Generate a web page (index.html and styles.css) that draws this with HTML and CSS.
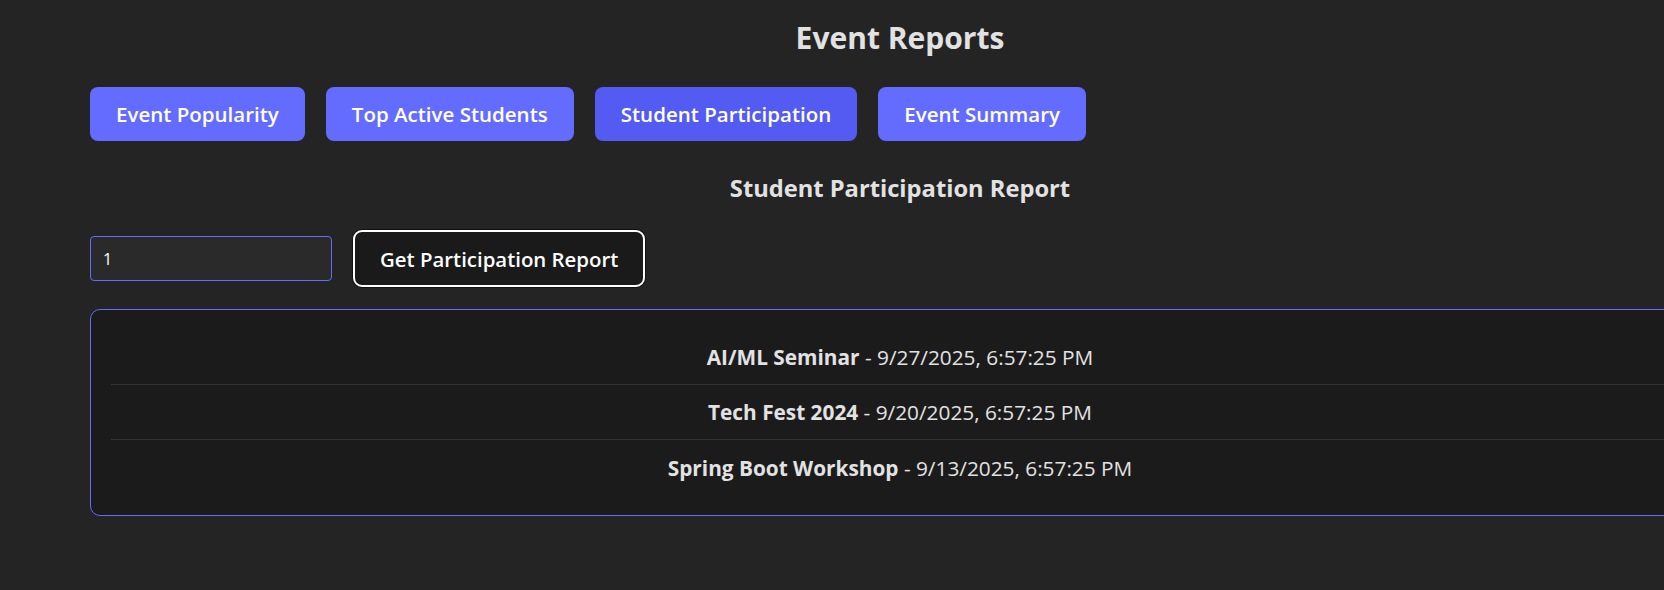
FILE: index.html
```html
<!DOCTYPE html>
<html lang="en">
<head>
<meta charset="utf-8">
<title>Event Reports</title>
<link rel="stylesheet" href="styles.css">
</head>
<body>
<div class="container">
  <h1 class="title">Event Reports</h1>
  <div class="tabs">
    <button class="tab">Event Popularity</button>
    <button class="tab">Top Active Students</button>
    <button class="tab active">Student Participation</button>
    <button class="tab">Event Summary</button>
  </div>
  <h2 class="subtitle">Student Participation Report</h2>
  <div class="form-row">
    <input class="id-input" type="text" value="1">
    <button class="fetch-btn">Get Participation Report</button>
  </div>
  <div class="panel">
    <div class="row"><strong>AI/ML Seminar</strong> - 9/27/2025, 6:57:25 PM</div>
    <div class="row"><strong>Tech Fest 2024</strong> - 9/20/2025, 6:57:25 PM</div>
    <div class="row"><strong>Spring Boot Workshop</strong> - 9/13/2025, 6:57:25 PM</div>
  </div>
</div>
</body>
</html>
```
FILE: styles.css
```css
html, body {
  margin: 0;
  padding: 0;
  background: #242424;
  overflow: hidden;
}
body {
  font-family: "Open Sans", "Noto Sans", sans-serif;
  color: rgba(255, 255, 255, 0.87);
}
.container {
  margin-left: 90px;
  width: 1620px;
  padding-top: 18px;
}
.title {
  margin: 0;
  font-size: 30px;
  line-height: 40px;
  font-weight: 700;
  text-align: center;
  color: #e2e2e2;
}
.tabs {
  display: flex;
  gap: 21px;
  margin-top: 29px;
}
.tab {
  height: 54px;
  padding: 0 26px;
  border: none;
  border-radius: 8px;
  background: #646cff;
  color: #ffffff;
  font-family: inherit;
  font-size: 20.5px;
  font-weight: 600;
  cursor: pointer;
}
.tab.active {
  background: #535bf2;
}
.subtitle {
  margin: 31px 0 0;
  font-size: 23.7px;
  line-height: 32px;
  font-weight: 700;
  text-align: center;
  color: #e2e2e2;
}
.form-row {
  display: flex;
  align-items: center;
  gap: 21px;
  margin-top: 26px;
}
.id-input {
  box-sizing: border-box;
  width: 242px;
  height: 45px;
  padding: 0 12px;
  border: 1px solid #646cff;
  border-radius: 4px;
  background: #2a2a2a;
  color: #ffffff;
  font-family: inherit;
  font-size: 16px;
  outline: none;
}
.fetch-btn {
  box-sizing: border-box;
  height: 57px;
  padding: 0 25px;
  border: 2px solid #ffffff;
  border-radius: 9px;
  box-shadow: 0 0 0 1px #111111;
  background: #1a1a1a;
  color: #ffffff;
  font-family: inherit;
  font-size: 20.4px;
  font-weight: 600;
}
.panel {
  margin-top: 22px;
  padding: 20px;
  border: 1px solid #646cff;
  border-radius: 10px;
  background: #1b1b1b;
}
.row {
  height: 55px;
  display: flex;
  align-items: center;
  justify-content: center;
  white-space: pre;
  font-size: 20.8px;
  color: #e2e2e2;
  border-bottom: 1px solid #333333;
  box-sizing: border-box;
}
.row:last-child {
  border-bottom: none;
}
.row strong {
  font-weight: 700;
}
```
